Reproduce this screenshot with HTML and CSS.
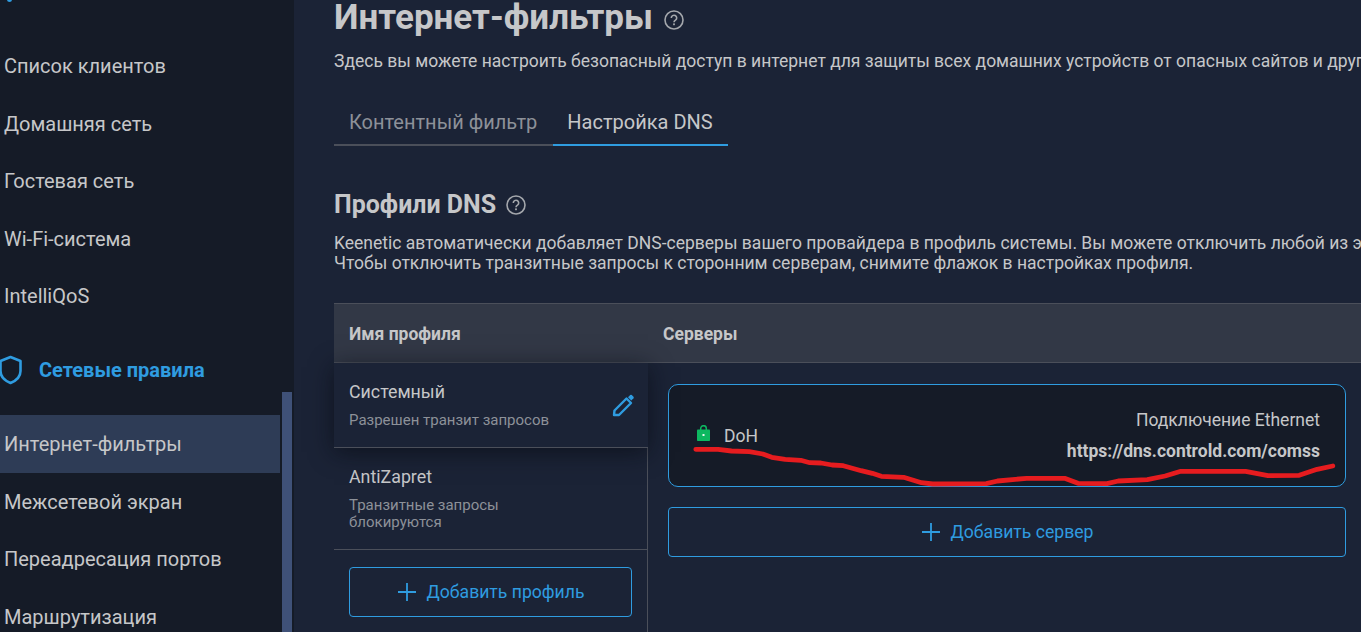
FILE: index.html
```html
<!DOCTYPE html>
<html lang="ru">
<head>
<meta charset="utf-8">
<title>Интернет-фильтры</title>
<link rel="stylesheet" href="styles.css">
</head>
<body>
<div class="app">
  <aside class="sidebar">
    <div class="nav">
      <span class="top-dot"></span>
      <div class="group">
        <a class="item">Список клиентов</a>
        <a class="item">Домашняя сеть</a>
        <a class="item">Гостевая сеть</a>
        <a class="item">Wi-Fi-система</a>
        <a class="item">IntelliQoS</a>
      </div>
      <div class="group-head">
        <svg class="shield" width="26" height="32" viewBox="0 0 26 32"><path d="M11.5 3 L21.5 7 V17 C21.5 23 16.5 27 11.5 29 C6.5 27 1.5 23 1.5 17 V7 Z" fill="none" stroke="#2f9ce0" stroke-width="2.6" stroke-linejoin="round"/></svg>
        <span>Сетевые правила</span>
      </div>
      <div class="group">
        <a class="item active">Интернет-фильтры</a>
        <a class="item">Межсетевой экран</a>
        <a class="item">Переадресация портов</a>
        <a class="item">Маршрутизация</a>
      </div>
    </div>
    <div class="scrollbar"><div class="thumb"></div></div>
  </aside>
  <main class="main">
    <div class="title-row">
      <h1>Интернет-фильтры</h1>
      <svg class="help title-help" width="20" height="20" viewBox="0 0 20 20"><circle cx="10" cy="10" r="9" fill="none" stroke="#a4a7ac" stroke-width="1.6"/><path d="M7.3 8a2.7 2.7 0 1 1 4.2 2.2c-.9.6-1.5 1-1.5 2" fill="none" stroke="#a4a7ac" stroke-width="1.6"/><rect x="9.1" y="13.4" width="1.8" height="1.8" fill="#a4a7ac"/></svg>
    </div>
    <p class="lead">Здесь вы можете настроить безопасный доступ в интернет для защиты всех домашних устройств от опасных сайтов и других угроз.</p>
    <div class="tabs">
      <div class="tab">Контентный фильтр</div>
      <div class="tab current">Настройка DNS</div>
    </div>
    <div class="section-row">
      <h2>Профили DNS</h2>
      <svg class="help" width="20" height="20" viewBox="0 0 20 20"><circle cx="10" cy="10" r="9" fill="none" stroke="#a4a7ac" stroke-width="1.6"/><path d="M7.3 8a2.7 2.7 0 1 1 4.2 2.2c-.9.6-1.5 1-1.5 2" fill="none" stroke="#a4a7ac" stroke-width="1.6"/><rect x="9.1" y="13.4" width="1.8" height="1.8" fill="#a4a7ac"/></svg>
    </div>
    <p class="desc">Keenetic автоматически добавляет DNS-серверы вашего провайдера в профиль системы. Вы можете отключить любой из этих серверов.<br>Чтобы отключить транзитные запросы к сторонним серверам, снимите флажок в настройках профиля.</p>
    <div class="table">
      <div class="thead">
        <div class="th th-name">Имя профиля</div>
        <div class="th">Серверы</div>
      </div>
      <div class="tbody">
        <div class="profiles">
          <div class="profile selected">
            <div class="profile-text">
              <div class="pname">Системный</div>
              <div class="pnote">Разрешен транзит запросов</div>
            </div>
            <svg class="pencil" width="24" height="24" viewBox="0 0 24 24"><path d="M3 22 L3.5 17.5 L15.5 5.5 L20 10 L8 22 Z" fill="none" stroke="#2f9ce0" stroke-width="2.4" stroke-linejoin="round"/><path d="M17 4.2 L19.2 2 Q20 1.4 20.8 2 L22.5 3.7 Q23.1 4.5 22.5 5.3 L20.3 7.5 Z" fill="#2f9ce0"/></svg>
          </div>
          <div class="profile">
            <div class="profile-text">
              <div class="pname">AntiZapret</div>
              <div class="pnote">Транзитные запросы<br>блокируются</div>
            </div>
          </div>
          <div class="add-wrap">
            <button class="add-btn">
              <svg width="20" height="20" viewBox="0 0 20 20"><path d="M10 1v18M1 10h18" stroke="#2f9ce0" stroke-width="1.8" fill="none"/></svg>
              <span>Добавить профиль</span>
            </button>
          </div>
        </div>
        <div class="servers">
          <div class="server-card">
            <div class="server-type">
              <svg class="lock" width="16" height="18" viewBox="0 0 16 18"><path d="M5.7 5V3.5a2.8 2.8 0 0 1 5.6 0V5" fill="none" stroke="#0db860" stroke-width="1.5"/><rect x="2" y="4.5" width="13" height="11.5" rx="0.8" fill="#0db860"/><rect x="7.5" y="9" width="2" height="2" fill="#e8f6ee"/></svg>
              <span>DoH</span>
            </div>
            <div class="server-info">
              <div class="conn">Подключение Ethernet</div>
              <div class="url">https://dns.controld.com/comss</div>
            </div>
          </div>
          <button class="add-btn add-server">
            <svg width="20" height="20" viewBox="0 0 20 20"><path d="M10 1v18M1 10h18" stroke="#2f9ce0" stroke-width="1.8" fill="none"/></svg>
            <span>Добавить сервер</span>
          </button>
        </div>
      </div>
    </div>
  </main>
  <svg class="scribble" width="1361" height="632" viewBox="0 0 1361 632"><path d="M695.8 449.3 L718.1 449.3 L731.5 451 L749.4 451.7 L762.8 454 L771.8 457.3 L785.2 459.3 L800.8 460.3 L809.8 462.7 L820.9 463 L832.1 465 L843.3 465.7 L861.2 470.7 L872.3 473.3 L881.3 476.3 L903.6 477.3 L921.5 482.7 L932.7 484 L986.3 483.7 L997.5 481 L1026.6 478.3 L1064.6 478.3 L1078 483.3 L1107 483.7 L1118.2 481 L1147.3 479.7 L1165.1 476 L1180.8 471.3 L1245.6 471.3 L1268 475.7 L1299.2 475.3 L1317.1 469.3 L1332.8 466" fill="none" stroke="#e61c1f" stroke-width="4.8" stroke-linecap="round" stroke-linejoin="round"/></svg>
</div>
</body>
</html>
```

FILE: styles.css
```css
* { box-sizing: border-box; }
html, body { margin: 0; padding: 0; height: 100%; overflow: hidden; }
body { background: #1b2336; color: #c6c7c9; font-family: Roboto, "Noto Sans", sans-serif; }
.app { display: flex; width: 1361px; height: 632px; position: relative; overflow: hidden; }

.sidebar { width: 294px; flex: none; background: #151b27; display: flex; position: relative; }
.nav { width: 280px; flex: none; padding-top: 37.4px; position: relative; }
.top-dot { position: absolute; left: 7px; top: -3px; width: 5px; height: 5px; border-radius: 50%; background: #2f9ce0; }
.group { display: flex; flex-direction: column; }
.item { display: flex; align-items: center; height: 57.5px; padding-left: 4px; font-size: 20px; color: #c6c7c9; }
.item.active { height: 58px; background: #2e3c56; }
.group-head { display: flex; align-items: center; gap: 14px; height: 61px; margin-top: 15px; margin-bottom: 14px; font-size: 20px; font-weight: 700; color: #2f9ce0; white-space: nowrap; }
.group-head .shield { flex: none; margin-left: -1px; }
.scrollbar { width: 10px; margin-left: 2px; padding-top: 392px; }
.thumb { height: 240px; background: #3f5178; }

.main { flex: 1; min-width: 0; padding-left: 40px; overflow: hidden; }
.title-row { display: flex; align-items: center; gap: 11px; height: 36px; }
.title-help { margin-top: 4px; }
h1 { margin: 0; font-size: 35px; line-height: 36px; font-weight: 700; color: #c6c7c9; white-space: nowrap; }
.lead { margin: 15px 0 0; font-size: 17.5px; line-height: 20px; white-space: nowrap; color: #c6c7c9; }
.tabs { display: flex; margin-top: 29px; width: 394px; }
.tab { height: 46px; padding: 9px 16px 0 15px; font-size: 20px; line-height: 26px; color: #8d9199; border-bottom: 2px solid #4b4f5a; white-space: nowrap; }
.tab.current { flex: 1; padding: 9px 0 0 14px; color: #c6c7c9; border-bottom-color: #2f9ce0; }
.section-row { display: flex; align-items: center; gap: 10px; height: 30px; margin-top: 44px; }
h2 { margin: 0; font-size: 25px; line-height: 30px; font-weight: 700; color: #c6c7c9; white-space: nowrap; }
.desc { margin: 13px 0 0; font-size: 17.5px; line-height: 20px; white-space: nowrap; color: #c6c7c9; }

.table { width: 1100px; margin-top: 30px; }
.thead { display: flex; height: 60px; background: #323846; border-top: 1px solid #4b4f5a; border-bottom: 1px solid #4b4f5a; }
.th { display: flex; align-items: center; padding-top: 1px; font-size: 17.5px; font-weight: 700; color: #c6c7c9; }
.th-name { width: 329px; padding-left: 15px; }
.tbody { display: flex; }
.profiles { width: 314px; flex: none; border-right: 1px solid #4b4f5a; height: 270px; }
.profile { display: flex; align-items: center; justify-content: space-between; padding: 0 13px 0 15px; border-bottom: 1px solid #4b4f5a; }
.profile.selected { height: 85px; width: 314px; box-shadow: 0 4px 22px rgba(8, 11, 18, 0.65); position: relative; background: #1b2336; }
.profile:not(.selected) { height: 102px; }
.pname { font-size: 17.8px; line-height: 22px; color: #c6c7c9; }
.pnote { font-size: 15px; line-height: 17px; color: #8d9199; margin-top: 9px; }
.add-wrap { padding: 17px 15px 0; }
.add-btn { display: flex; align-items: center; justify-content: center; gap: 10px; width: 283px; height: 50px; background: transparent; border: 1px solid #2f9ce0; border-radius: 4px; font-family: inherit; font-size: 17.6px; color: #2f9ce0; padding: 0; }
.servers { margin-left: 20px; padding-top: 21px; width: 678px; }
.server-card { display: flex; justify-content: space-between; height: 103px; background: #151b27; border: 1px solid #2f9ce0; border-radius: 10px; padding: 24px 25px 0 26px; }
.server-type { display: flex; align-items: center; gap: 13px; height: 22px; margin-top: 16px; font-size: 17.5px; color: #c6c7c9; }
.lock { margin-top: -4px; }
.server-info { text-align: right; }
.conn { font-size: 17.5px; line-height: 22px; color: #c6c7c9; }
.url { font-size: 17.5px; line-height: 22px; font-weight: 700; margin-top: 9px; color: #c6c7c9; }
.add-server { width: 678px; margin-top: 20px; }

.scribble { position: absolute; left: 0; top: 0; pointer-events: none; }
```
